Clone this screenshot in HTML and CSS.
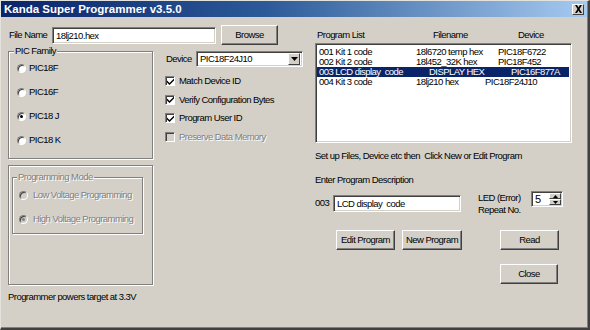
FILE: index.html
```html
<!DOCTYPE html>
<html>
<head>
<meta charset="utf-8">
<link rel="stylesheet" href="styles.css">
</head>
<body>
<div class="window">
  <div class="titlebar">
    <span class="title">Kanda Super Programmer v3.5.0</span>
    <span class="title-close"><svg width="9" height="8" viewBox="0 0 9 8"><path d="M1 0h2l1.5 2.5L6 0h2L5.5 4 8 8H6L4.5 5.5 3 8H1l2.5-4z" fill="#000"/></svg></span>
  </div>
  <div class="content">
    <div class="left">
      <div class="file-row">
        <span class="file-label">File Name</span>
        <div class="field file-input">18lj210.hex</div>
        <div class="btn browse">Browse</div>
      </div>
      <div class="left-main">
        <div class="groups">
          <fieldset class="group family">
            <legend>PIC Family</legend>
            <div class="radio-row"><span class="radio"></span><span>PIC18F</span></div>
            <div class="radio-row"><span class="radio"></span><span>PIC16F</span></div>
            <div class="radio-row"><span class="radio checked"></span><span>PIC18 J</span></div>
            <div class="radio-row"><span class="radio"></span><span>PIC18 K</span></div>
          </fieldset>
          <div class="etched mode-outer">
            <fieldset class="group mode disabled">
              <legend>Programming Mode</legend>
              <div class="radio-row"><span class="radio dim"></span><span>Low Voltage Programming</span></div>
              <div class="radio-row"><span class="radio dim checked"></span><span>High Voltage Programming</span></div>
            </fieldset>
          </div>
          <div class="status">Programmer powers target at 3.3V</div>
        </div>
        <div class="options">
          <div class="device-row">
            <span class="device-label">Device</span>
            <div class="field combo"><span class="combo-text">PIC18F24J10</span><span class="combo-btn"><svg width="7" height="4" viewBox="0 0 7 4"><path d="M0 0h7L3.5 4z" fill="#000"/></svg></span></div>
          </div>
          <div class="check-row"><span class="check on"><svg width="7" height="7" viewBox="0 0 7 7"><path d="M0 2.5l2.5 2.5L7 0.5v2L2.5 7 0 4.5z" fill="#000"/></svg></span><span>Match Device ID</span></div>
          <div class="check-row"><span class="check on"><svg width="7" height="7" viewBox="0 0 7 7"><path d="M0 2.5l2.5 2.5L7 0.5v2L2.5 7 0 4.5z" fill="#000"/></svg></span><span>Verify Configuration Bytes</span></div>
          <div class="check-row"><span class="check on"><svg width="7" height="7" viewBox="0 0 7 7"><path d="M0 2.5l2.5 2.5L7 0.5v2L2.5 7 0 4.5z" fill="#000"/></svg></span><span>Program User ID</span></div>
          <div class="check-row disabled"><span class="check dim"></span><span>Preserve Data Memory</span></div>
        </div>
      </div>
    </div>
    <div class="right">
      <div class="list-head">
        <span class="h-name">Program List</span>
        <span class="h-file">Filename</span>
        <span class="h-dev">Device</span>
      </div>
      <div class="listbox">
        <div class="row"><span class="c1">001 Kit 1 code</span><span class="c2">18l6720 temp hex</span><span class="c3">PIC18F6722</span></div>
        <div class="row"><span class="c1">002 Kit 2 code</span><span class="c2">18l452_32K hex</span><span class="c3">PIC18F452</span></div>
        <div class="row sel"><span class="c1">003 LCD display  code</span><span class="c2 f3">DISPLAY HEX</span><span class="c3">PIC16F877A</span></div>
        <div class="row"><span class="c1">004 Kit 3 code</span><span class="c2">18lj210 hex</span><span class="c3 d4">PIC18F24J10</span></div>
      </div>
      <div class="hint">Set up Files, Device etc then&nbsp; Click New or Edit Program</div>
      <div class="desc-label">Enter Program Description</div>
      <div class="desc-row">
        <span class="num">003</span>
        <div class="field desc-input">LCD display&nbsp; code</div>
        <div class="led-label">LED (Error)<br>Repeat No.</div>
        <div class="field spin">
          <span class="spin-text">5</span>
          <span class="spin-btns">
            <span class="spin-b"><svg width="5" height="3" viewBox="0 0 5 3"><path d="M2.5 0L5 3H0z" fill="#000"/></svg></span>
            <span class="spin-b"><svg width="5" height="3" viewBox="0 0 5 3"><path d="M0 0h5L2.5 3z" fill="#000"/></svg></span>
          </span>
        </div>
      </div>
      <div class="btn-row">
        <div class="btn edit">Edit Program</div>
        <div class="btn new">New Program</div>
        <div class="btn read">Read</div>
      </div>
      <div class="close-row">
        <div class="btn close">Close</div>
      </div>
    </div>
  </div>
</div>
</body>
</html>
```

FILE: styles.css
```css
* { box-sizing: border-box; }
html, body { margin: 0; padding: 0; }
body {
  width: 590px;
  height: 330px;
  overflow: hidden;
  background: #d4d0c8;
  font-family: "Liberation Sans", Arial, sans-serif;
  font-size: 9.5px;
  letter-spacing: -0.55px;
  line-height: 12px;
  color: #000;
  white-space: nowrap;
}
.window {
  width: 590px;
  height: 330px;
  background: #d4d0c8;
  border-top: 1px solid #e4e2dc;
  border-left: 1px solid #e4e2dc;
  border-right: 2px solid #404040;
  border-bottom: 2px solid #404040;
  box-shadow: inset -1px -1px 0 #808080;
  display: flex;
  flex-direction: column;
}
.titlebar {
  height: 16px;
  margin-right: 1px;
  background: linear-gradient(to right, #0a246a 0%, #2c5a98 45%, #a6caf0 100%);
  display: flex;
  align-items: center;
  justify-content: space-between;
  padding: 0 3px 0 3px;
}
.title {
  color: #fff;
  font-weight: bold;
  font-size: 11.5px;
  letter-spacing: 0;
}
.title-close {
  width: 12px;
  height: 11px;
  background: #d4d0c8;
  border-top: 1px solid #fff;
  border-left: 1px solid #fff;
  border-right: 1px solid #404040;
  border-bottom: 1px solid #404040;
  display: flex;
  align-items: center;
  justify-content: center;
}
.content {
  display: flex;
  align-items: flex-start;
  padding-left: 7px;
}
.left {
  width: 300px;
  margin-top: 8px;
}
.file-row {
  display: flex;
  align-items: center;
  height: 20px;
}
.file-label { width: 44px; padding-left: 1px; }
.field {
  background: #fff;
  border-top: 1px solid #808080;
  border-left: 1px solid #808080;
  border-right: 1px solid #fff;
  border-bottom: 1px solid #fff;
  box-shadow: inset 1px 1px 0 #404040, inset -1px -1px 0 #d4d0c8;
}
.file-input {
  width: 164px;
  height: 17px;
  padding: 2px 0 0 3px;
}
.btn {
  background: #d4d0c8;
  border-top: 1px solid #fff;
  border-left: 1px solid #fff;
  border-right: 1px solid #404040;
  border-bottom: 1px solid #404040;
  box-shadow: inset -1px -1px 0 #808080;
  display: flex;
  align-items: center;
  justify-content: center;
  height: 20px;
}
.browse { width: 57px; margin-left: 5px; }
.left-main {
  display: flex;
  align-items: flex-start;
}
.groups { width: 145px; }
.group {
  margin: 0;
  padding: 0 0 0 5px;
  border: 1px solid #808080;
  box-shadow: inset 1px 1px 0 #fff, 1px 1px 0 #fff;
  min-width: 0;
}
.group legend {
  padding: 0 1px;
  background: #d4d0c8;
  line-height: 12px;
}
.family { height: 114px; }
.radio-row {
  display: flex;
  align-items: center;
  height: 24px;
  margin-left: 3px;
}
.family .radio-row:first-of-type { margin-top: -1px; }
.radio {
  width: 9px;
  height: 9px;
  border-radius: 50%;
  background: #fff;
  border: 1px solid;
  border-color: #808080 #fff #fff #808080;
  box-shadow: inset 1px 1px 0 #404040;
  margin-right: 3px;
  position: relative;
}
.radio.checked::after {
  content: "";
  position: absolute;
  left: 2px;
  top: 2px;
  width: 3px;
  height: 3px;
  border-radius: 50%;
  background: #000;
}
.radio.dim { background: #d4d0c8; }
.radio.dim.checked::after { background: #808080; }
.mode-outer {
  margin-top: 6px;
  height: 120px;
  border: 1px solid #808080;
  box-shadow: inset 1px 1px 0 #fff, 1px 1px 0 #fff;
  padding: 5px 0 0 3px;
}
.mode {
  width: 131px;
  height: 63px;
  padding-left: 4px;
}
.mode .radio-row { margin-left: 2px; }
.mode .radio { margin-right: 5px; }
.disabled, .disabled legend {
  color: #808080;
  text-shadow: 1px 1px 0 #fff;
}
.status { margin-top: 6px; }
.options {
  margin-left: 12px;
  margin-top: 6px;
}
.device-row {
  display: flex;
  align-items: center;
  height: 16px;
}
.device-label { width: 30px; margin-left: 1px; }
.combo {
  width: 107px;
  height: 16px;
  display: flex;
  align-items: center;
  justify-content: space-between;
  padding: 0 2px 0 3px;
}
.combo-btn {
  width: 12px;
  height: 12px;
  background: #d4d0c8;
  border-top: 1px solid #fff;
  border-left: 1px solid #fff;
  border-right: 1px solid #404040;
  border-bottom: 1px solid #404040;
  display: flex;
  align-items: center;
  justify-content: center;
}
.device-row + .check-row { margin-top: 5px; }
.check-row {
  display: flex;
  align-items: center;
  height: 18.5px;
}
.check {
  width: 10px;
  height: 10px;
  background: #fff;
  border: 1px solid;
  border-color: #808080 #fff #fff #808080;
  box-shadow: inset 1px 1px 0 #404040;
  margin-right: 4px;
  display: flex;
  align-items: center;
  justify-content: center;
}
.check.dim { background: #d4d0c8; }
.right {
  width: 257px;
  margin-left: 7px;
  margin-top: 12px;
}
.list-head {
  display: flex;
  height: 12px;
}
.h-name { width: 118px; padding-left: 2px; }
.h-file { width: 85px; }
.listbox {
  margin-top: 2px;
  height: 100px;
  background: #fff;
  border-top: 1px solid #808080;
  border-left: 1px solid #808080;
  border-right: 1px solid #fff;
  border-bottom: 1px solid #fff;
  box-shadow: inset 1px 1px 0 #404040, inset -1px -1px 0 #d4d0c8;
  padding: 3px 2px 0 1px;
}
.row {
  display: flex;
  height: 10px;
  line-height: 10px;
  white-space: pre;
}
.row.sel { background: #0a246a; color: #fff; }
.c1 { width: 99px; padding-left: 2px; }
.c2 { width: 82px; }
.c2.f3 { padding-left: 13px; width: 95px; }
.c2 + .d4 { margin-left: -13px; }
.hint { margin-top: 7px; }
.desc-label { margin-top: 12px; }
.desc-row {
  display: flex;
  align-items: flex-start;
  margin-top: 9px;
  height: 17px;
}
.num { margin-top: 2px; width: 18px; }
.desc-input {
  width: 128px;
  height: 17px;
  padding: 2px 0 0 3px;
}
.led-label {
  margin-left: 17px;
  width: 53px;
  margin-top: -3px;
}
.spin {
  margin-top: -4px;
  width: 32px;
  height: 16px;
  display: flex;
  align-items: center;
  justify-content: space-between;
  padding: 0 1px 0 3px;
}
.spin-text { font-size: 11px; }
.spin-btns {
  display: flex;
  flex-direction: column;
  width: 12px;
  height: 12px;
}
.spin-b {
  flex: 1;
  background: #d4d0c8;
  border-top: 1px solid #fff;
  border-left: 1px solid #fff;
  border-right: 1px solid #404040;
  border-bottom: 1px solid #404040;
  display: flex;
  align-items: center;
  justify-content: center;
}
.btn-row {
  display: flex;
  margin-top: 18px;
}
.edit { width: 59px; margin-left: 21px; }
.new { width: 60px; margin-left: 7px; }
.read { width: 59px; margin-left: 38px; }
.close-row {
  display: flex;
  margin-top: 14px;
}
.close { width: 58px; margin-left: 185px; }
```
